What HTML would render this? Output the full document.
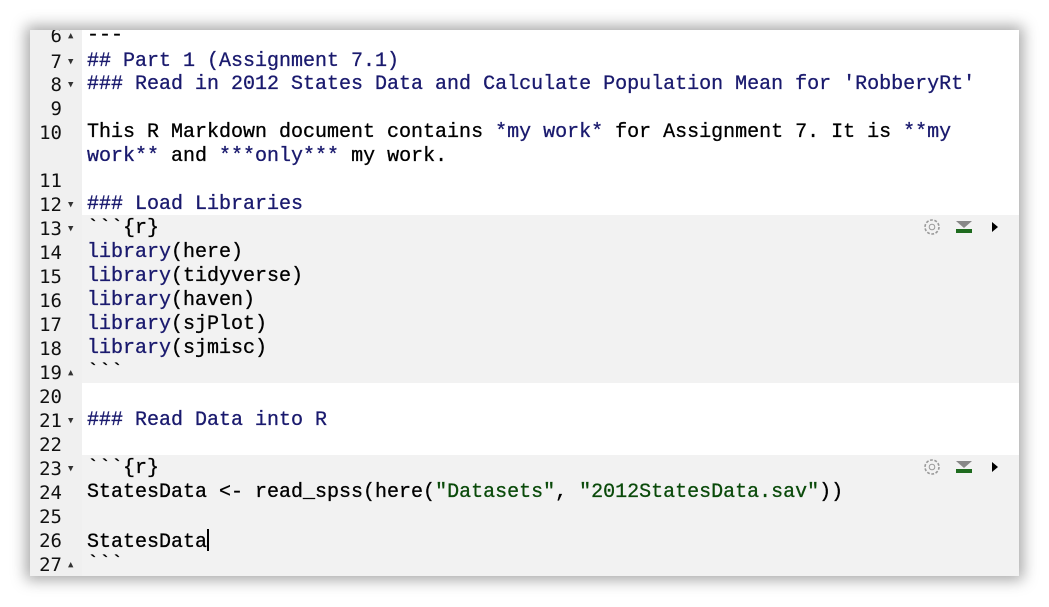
<!DOCTYPE html>
<html><head><style>
body{margin:0;width:1049px;height:607px;background:#fff;overflow:hidden;position:relative;font-family:"Liberation Mono",monospace;}
#panel{position:absolute;left:30px;top:30px;width:989px;height:546px;background:#fff;box-shadow:0 0 14px 4px rgba(0,0,0,.35);overflow:hidden;}
#gut{position:absolute;left:0;top:0;width:52px;height:546px;background:#f0f0f0;}
.chunk{position:absolute;left:52px;right:0;background:#f2f2f2;}
.ln{position:absolute;left:0;width:52px;height:24px;line-height:24px;font-size:19px;color:#111;font-family:"DejaVu Sans Mono",monospace;margin-top:2px;}
.ln span.n{position:absolute;right:20px;}
.ln span.a{position:absolute;left:38px;font-size:9px;color:#333;}
.tx{position:absolute;left:57px;height:24px;line-height:24px;font-size:20px;white-space:pre;color:#000;margin-top:2px;-webkit-text-stroke:0.3px currentColor;}
.b{color:#1a1a6e}
.ic{position:absolute;}
</style></head><body>
<div id="panel">
<div id="gut"></div>
<div class="chunk" style="top:185px;height:168px"></div>
<div class="chunk" style="top:425px;height:121px"></div>

<div class="ln" style="top:-8px"><span class="n">6</span><span class="a">▲</span></div><div class="tx" style="top:-8px">---</div>
<div class="ln" style="top:18px"><span class="n">7</span><span class="a">▼</span></div><div class="tx b" style="top:18px">## Part 1 (Assignment 7.1)</div>
<div class="ln" style="top:41px"><span class="n">8</span><span class="a">▼</span></div><div class="tx b" style="top:41px">### Read in 2012 States Data and Calculate Population Mean for 'RobberyRt'</div>
<div class="ln" style="top:65px"><span class="n">9</span></div>
<div class="ln" style="top:89px"><span class="n">10</span></div><div class="tx" style="top:89px">This R Markdown document contains <span class="b">*my work*</span> for Assignment 7. It is <span class="b">**my</span></div>
<div class="tx" style="top:113px"><span class="b">work**</span> and <span class="b">***only***</span> my work.</div>
<div class="ln" style="top:137px"><span class="n">11</span></div>
<div class="ln" style="top:161px"><span class="n">12</span><span class="a">▼</span></div><div class="tx b" style="top:161px">### Load Libraries</div>
<div class="ln" style="top:185px"><span class="n">13</span><span class="a">▼</span></div><div class="tx" style="top:185px">&#96;&#96;&#96;{r}</div>
<div class="ln" style="top:209px"><span class="n">14</span></div><div class="tx" style="top:209px"><span class="b">library</span>(here)</div>
<div class="ln" style="top:233px"><span class="n">15</span></div><div class="tx" style="top:233px"><span class="b">library</span>(tidyverse)</div>
<div class="ln" style="top:257px"><span class="n">16</span></div><div class="tx" style="top:257px"><span class="b">library</span>(haven)</div>
<div class="ln" style="top:281px"><span class="n">17</span></div><div class="tx" style="top:281px"><span class="b">library</span>(sjPlot)</div>
<div class="ln" style="top:305px"><span class="n">18</span></div><div class="tx" style="top:305px"><span class="b">library</span>(sjmisc)</div>
<div class="ln" style="top:329px"><span class="n">19</span><span class="a">▲</span></div><div class="tx" style="top:329px">&#96;&#96;&#96;</div>
<div class="ln" style="top:353px"><span class="n">20</span></div>
<div class="ln" style="top:377px"><span class="n">21</span><span class="a">▼</span></div><div class="tx b" style="top:377px">### Read Data into R</div>
<div class="ln" style="top:401px"><span class="n">22</span></div>
<div class="ln" style="top:425px"><span class="n">23</span><span class="a">▼</span></div><div class="tx" style="top:425px">&#96;&#96;&#96;{r}</div>
<div class="ln" style="top:449px"><span class="n">24</span></div><div class="tx" style="top:449px">StatesData &lt;- read_spss(here(<span style="color:#0a4a0a">"Datasets"</span>, <span style="color:#0a4a0a">"2012StatesData.sav"</span>))</div>
<div class="ln" style="top:473px"><span class="n">25</span></div>
<div class="ln" style="top:497px"><span class="n">26</span></div><div class="tx" style="top:497px">StatesData<span style="display:inline-block;width:2px;height:22px;background:#000;vertical-align:-4px"></span></div>
<div class="ln" style="top:521px"><span class="n">27</span><span class="a">▲</span></div><div class="tx" style="top:521px">&#96;&#96;&#96;</div>

<svg class="ic" style="left:888px;top:186px" width="84" height="22">
<circle cx="14" cy="11" r="7" fill="none" stroke="#999" stroke-width="1.6" stroke-dasharray="2.8 1.6"/><circle cx="14" cy="11" r="2.8" fill="none" stroke="#999"/>
<path d="M38 5h16l-8 7z" fill="#888"/><rect x="38" y="13" width="16" height="4" fill="#1f6b1f"/>
<path d="M74 6v10l6-5z" fill="#000"/>
</svg>
<svg class="ic" style="left:888px;top:426px" width="84" height="22">
<circle cx="14" cy="11" r="7" fill="none" stroke="#999" stroke-width="1.6" stroke-dasharray="2.8 1.6"/><circle cx="14" cy="11" r="2.8" fill="none" stroke="#999"/>
<path d="M38 5h16l-8 7z" fill="#888"/><rect x="38" y="13" width="16" height="4" fill="#1f6b1f"/>
<path d="M74 6v10l6-5z" fill="#000"/>
</svg>
</div>
</body></html>
